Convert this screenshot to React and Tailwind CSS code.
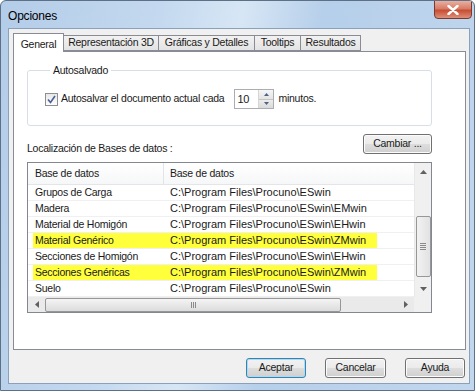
import React from 'react';

const rows = [
  { name: 'Grupos de Carga', path: 'C:\\Program Files\\Procuno\\ESwin' },
  { name: 'Madera', path: 'C:\\Program Files\\Procuno\\ESwin\\EMwin' },
  { name: 'Material de Homigón', path: 'C:\\Program Files\\Procuno\\ESwin\\EHwin' },
  { name: 'Material Genérico', path: 'C:\\Program Files\\Procuno\\ESwin\\ZMwin', hl: true },
  { name: 'Secciones de Homigón', path: 'C:\\Program Files\\Procuno\\ESwin\\EHwin' },
  { name: 'Secciones Genéricas', path: 'C:\\Program Files\\Procuno\\ESwin\\ZMwin', hl: true },
  { name: 'Suelo', path: 'C:\\Program Files\\Procuno\\ESwin' },
];

function Button({ children, primary, className = '' }) {
  return (
    <div
      className={`flex items-center justify-center h-[20px] rounded-[3px] border text-[#1a1a1a] bg-[linear-gradient(to_bottom,#f2f2f2_0%,#ebebeb_48%,#dddddd_52%,#cfcfcf_100%)] ${
        primary ? 'border-[#3c7fb1] shadow-[inset_0_0_0_1px_#a7dcf5]' : 'border-[#707070] shadow-[inset_0_0_0_1px_#fcfcfc]'
      } ${className}`}
    >
      {children}
    </div>
  );
}

function Tab({ label, active, w }) {
  if (active) {
    return (
      <div className={`relative z-10 ${w} h-[19px] -mb-px bg-white border border-b-0 border-[#898c95] flex items-start justify-center pt-[3px] whitespace-nowrap`}>
        {label}
      </div>
    );
  }
  return (
    <div className={`${w} -ml-px h-[16px] border border-[#898c95] bg-[linear-gradient(to_bottom,#f2f2f2,#e3e3e3)] flex items-center justify-center whitespace-nowrap`}>
      {label}
    </div>
  );
}

export default function App() {
  return (
    <div
      className="w-[475px] h-[391px] overflow-hidden rounded-t-[6px] border border-[#5d7086] bg-[linear-gradient(100deg,#b3cce8_0%,#c4d9ef_30%,#d7e6f5_45%,#b6cfea_60%,#c1d7ee_100%)] text-[10.5px] tracking-[-0.25px] text-[#1a1a1a]"
      style={{ fontFamily: '"Liberation Sans", Arial, sans-serif' }}
    >
      {/* title bar */}
      <div className="flex justify-between h-[27px]">
        <div className="pl-[7px] pt-[6px] text-[12px] tracking-[-0.2px] text-black">Opciones</div>
        <div className="mr-[2px] w-[38px] h-[19px] -mt-px rounded-b-[4px] border border-[#7a3a32] bg-[linear-gradient(to_bottom,#e9b0a2_0%,#d87c66_45%,#c84d33_55%,#dc907a_100%)] flex items-center justify-center">
          <svg width="12" height="10" viewBox="0 0 12 10">
            <path d="M1.5 1 L10.5 9 M10.5 1 L1.5 9" stroke="#fff" strokeWidth="2.4" strokeLinecap="round" />
          </svg>
        </div>
      </div>

      {/* client area */}
      <div className="ml-[7px] w-[462px] h-[356px] bg-[#f0f0f0] border border-[#8ba0bb] pl-[4px] pt-[3px]">
        <div className="flex items-end h-[19px]">
          <Tab label="General" active w="w-[51px]" />
          <Tab label="Representación 3D" w="w-[96px]" />
          <Tab label="Gráficas y Detalles" w="w-[97px]" />
          <Tab label="Tooltips" w="w-[47px]" />
          <Tab label="Resultados" w="w-[61px]" />
        </div>

        <div className="w-[453px] h-[299px] bg-white border border-[#898c95] pl-[13px] pt-[12px]">
          <fieldset className="w-[405px] h-[62px] border border-[#d5dfe5] rounded-[3px] pl-[17px]">
            <legend className="ml-[5px] px-[3px] leading-[13px]">Autosalvado</legend>
            <div className="flex items-center mt-[12px] h-[20px]">
              <div className="w-[13px] h-[13px] border border-[#8e8f8f] bg-[linear-gradient(to_bottom,#e8e8e8,#fdfdfd)] flex items-center justify-center">
                <svg width="9" height="9" viewBox="0 0 9 9">
                  <path d="M1 4.5 L3.5 7.5 L8 1" stroke="#4a5f97" strokeWidth="1.6" fill="none" />
                </svg>
              </div>
              <span className="ml-[3px]">Autosalvar el documento actual cada</span>
              <div className="ml-[10px] flex w-[40px] h-[20px] border border-[#abadb3] bg-white">
                <div className="flex-1 pl-[2px] flex items-center text-[11px]">10</div>
                <div className="w-[15px] flex flex-col border-l border-[#d5d5d5]">
                  <div className="flex-1 flex items-center justify-center bg-[linear-gradient(to_bottom,#f6f6f6,#e4e4e4)] border-b border-[#c5c5c5]">
                    <svg width="5" height="3" viewBox="0 0 5 3"><path d="M0 3 L2.5 0 L5 3Z" fill="#4d6185" /></svg>
                  </div>
                  <div className="flex-1 flex items-center justify-center bg-[linear-gradient(to_bottom,#ececec,#dadada)]">
                    <svg width="5" height="3" viewBox="0 0 5 3"><path d="M0 0 L2.5 3 L5 0Z" fill="#4d6185" /></svg>
                  </div>
                </div>
              </div>
              <span className="ml-[4px]">minutos.</span>
            </div>
          </fieldset>

          <div className="flex items-end justify-between w-[405px] mt-[8px] h-[20px]">
            <div className="leading-[13px] -mb-[1px]">Localización de Bases de datos :</div>
            <Button className="w-[69px]">Cambiar ...</Button>
          </div>

          {/* list view */}
          <div className="mt-[8px] w-[405px] h-[151px] border border-[#828790] flex flex-col">
            <div className="flex h-[134px]">
              <div className="flex-1 overflow-hidden">
                <div className="flex h-[22px] border-b border-[#e5e5e5] bg-[linear-gradient(to_bottom,#ffffff,#f6f7f8)]">
                  <div className="w-[136px] border-r border-[#e3e4e5] pl-[7px] flex items-center">Base de datos</div>
                  <div className="flex-1 pl-[6px] flex items-center">Base de datos</div>
                </div>
                {rows.map((r) => (
                  <div key={r.name} className="flex h-[16px] border-b border-[#f0f0f0]">
                    <div className="pl-[5px] flex w-full">
                      <div className={`flex w-[344px] ${r.hl ? 'bg-[#ffff3c]' : ''}`}>
                        <div className="w-[133px] pl-[2px] leading-[15px]">{r.name}</div>
                        <div className="flex-1 pl-[4px] leading-[15px] whitespace-nowrap text-[11px] tracking-normal">{r.path}</div>
                      </div>
                    </div>
                  </div>
                ))}
              </div>
              {/* vertical scrollbar */}
              <div className="w-[17px] bg-[#f0f0f0] border-l border-[#e8e8e8] flex flex-col items-center">
                <div className="h-[17px] flex items-center justify-center">
                  <svg width="7" height="4" viewBox="0 0 7 4"><path d="M0 4 L3.5 0 L7 4Z" fill="#606060" /></svg>
                </div>
                <div className="mt-[36px] w-[15px] h-[61px] rounded-[2px] border border-[#979797] bg-[linear-gradient(to_right,#f2f2f2,#e2e2e2)] flex items-center justify-center">
                  <div className="flex flex-col gap-[1px]">
                    <div className="w-[6px] h-px bg-[#8a8a8a]" />
                    <div className="w-[6px] h-px bg-[#8a8a8a]" />
                    <div className="w-[6px] h-px bg-[#8a8a8a]" />
                    <div className="w-[6px] h-px bg-[#8a8a8a]" />
                  </div>
                </div>
                <div className="mt-auto h-[17px] flex items-center justify-center">
                  <svg width="7" height="4" viewBox="0 0 7 4"><path d="M0 0 L3.5 4 L7 0Z" fill="#606060" /></svg>
                </div>
              </div>
            </div>
            {/* horizontal scrollbar */}
            <div className="flex h-[15px]">
              <div className="flex-1 flex items-center bg-[#eaeaea]">
                <div className="w-[17px] flex items-center justify-center">
                  <svg width="4" height="7" viewBox="0 0 4 7"><path d="M4 0 L0 3.5 L4 7Z" fill="#606060" /></svg>
                </div>
                <div className="w-[296px] h-[14px] rounded-[2px] border border-[#979797] bg-[linear-gradient(to_bottom,#f4f4f4,#dcdcdc)] flex items-center justify-center">
                  <div className="flex gap-[1px]">
                    <div className="w-px h-[6px] bg-[#8a8a8a]" />
                    <div className="w-px h-[6px] bg-[#8a8a8a]" />
                    <div className="w-px h-[6px] bg-[#8a8a8a]" />
                  </div>
                </div>
                <div className="ml-auto w-[17px] flex items-center justify-center">
                  <svg width="4" height="7" viewBox="0 0 4 7"><path d="M0 0 L4 3.5 L0 7Z" fill="#606060" /></svg>
                </div>
              </div>
              <div className="w-[17px] bg-[#f0f0f0]" />
            </div>
          </div>
        </div>

        {/* bottom buttons */}
        <div className="flex justify-end pr-[4px] mt-[8px] gap-[19px]">
          <Button primary className="w-[60px]">Aceptar</Button>
          <Button className="w-[61px]">Cancelar</Button>
          <Button className="w-[60px]">Ayuda</Button>
        </div>
      </div>
    </div>
  );
}
